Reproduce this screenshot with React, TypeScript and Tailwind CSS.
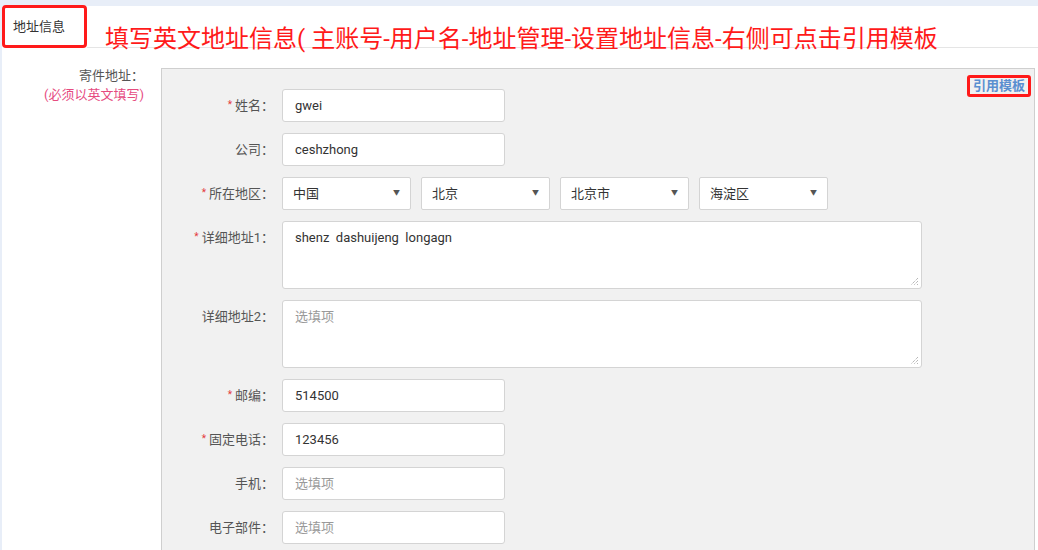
import React from "react";

const font = { fontFamily: 'Roboto, "Noto Sans CJK SC", sans-serif' };

function Label({ text, req }: { text: string; req?: boolean }) {
  return (
    <div className="w-[120px] shrink-0 text-right text-[13px] text-[#555] pr-[8px]">
      {req && <span className="text-[#e4393c] text-[10px] mr-[3px] align-[2px]">*</span>}
      {text}：
    </div>
  );
}

function Input({ value, placeholder }: { value?: string; placeholder?: string }) {
  return (
    <div className="w-[223px] h-[33px] bg-white border border-[#d4d4d4] rounded-[3px] flex items-center px-[12px] text-[13px]">
      {value ? <span className="text-[#333]">{value}</span> : <span className="text-[#999]">{placeholder}</span>}
    </div>
  );
}

function Select({ value }: { value: string }) {
  return (
    <div className="w-[129px] h-[33px] bg-white border border-[#d4d4d4] rounded-[2px] flex items-center justify-between pl-[10px] pr-[10px] text-[13px] text-[#333]">
      <span>{value}</span>
      <span className="text-[7px] text-[#555]">▼</span>
    </div>
  );
}

function TextArea({ value, placeholder }: { value?: string; placeholder?: string }) {
  return (
    <div className="relative w-[640px] h-[68px] bg-white border border-[#d4d4d4] rounded-[3px] px-[12px] pt-[6px] text-[13px]">
      {value ? <span className="text-[#333] whitespace-pre">{value}</span> : <span className="text-[#999]">{placeholder}</span>}
      <svg className="absolute right-[2px] bottom-[2px]" width="9" height="9" viewBox="0 0 9 9">
        <path d="M8 1L1 8M8 4L4 8M8 7L7 8" stroke="#999" strokeWidth="1" strokeDasharray="1 1" />
      </svg>
    </div>
  );
}

function Row({ label, req, children, tall }: { label: string; req?: boolean; children: React.ReactNode; tall?: boolean }) {
  return (
    <div className={`flex ${tall ? "items-start" : "items-center"}`}>
      <div className={tall ? "pt-[7px]" : ""}>
        <Label text={label} req={req} />
      </div>
      {children}
    </div>
  );
}

export default function App() {
  return (
    <div className="w-[1038px] h-[550px] overflow-hidden bg-[#e8eef8] pt-[6px] pl-[2px]" style={font}>
      <div className="bg-white h-full">
        {/* tab header */}
        <div className="flex items-end h-[42px]">
          <div className="w-[85px] h-[43px] border-[3px] border-[#ff1a1a] rounded-[4px] flex items-center pl-[8px] text-[13px] text-[#333] -mt-[1px]">
            地址信息
          </div>
          <div className="flex-1 border-b border-[#e5e5e5] h-full flex items-center pl-[18px] pt-[24px]">
            <span className="text-[24px] text-[#ff1a1a] leading-none">填写英文地址信息( 主账号-用户名-地址管理-设置地址信息-右侧可点击引用模板</span>
          </div>
        </div>

        <div className="flex pt-[20px]">
          <div className="w-[159px] shrink-0 text-right pr-[17px] text-[13px] leading-[19px] -mt-[2px]">
            <div className="text-[#555]">寄件地址：</div>
            <div className="text-[#e64b7f]">(必须以英文填写)</div>
          </div>

          <div className="relative flex-1 mr-[3px] bg-[#f1f1f1] border border-[#cfcfcf] h-[500px] pt-[20px]">
            <div className="absolute right-[3px] top-[6px] border-[3px] border-[#ff1a1a] rounded-[3px] px-[3px] text-[13px] font-bold text-[#5b8fd0] leading-[16px]">
              引用模板
            </div>
            <div className="flex flex-col gap-[11px]">
              <Row label="姓名" req><Input value="gwei" /></Row>
              <Row label="公司"><Input value="ceshzhong" /></Row>
              <Row label="所在地区" req>
                <div className="flex gap-[10px]">
                  <Select value="中国" />
                  <Select value="北京" />
                  <Select value="北京市" />
                  <Select value="海淀区" />
                </div>
              </Row>
              <Row label="详细地址1" req tall><TextArea value="shenz  dashuijeng  longagn" /></Row>
              <Row label="详细地址2" tall><TextArea placeholder="选填项" /></Row>
              <Row label="邮编" req><Input value="514500" /></Row>
              <Row label="固定电话" req><Input value="123456" /></Row>
              <Row label="手机"><Input placeholder="选填项" /></Row>
              <Row label="电子部件"><Input placeholder="选填项" /></Row>
            </div>
          </div>
        </div>
      </div>
    </div>
  );
}
